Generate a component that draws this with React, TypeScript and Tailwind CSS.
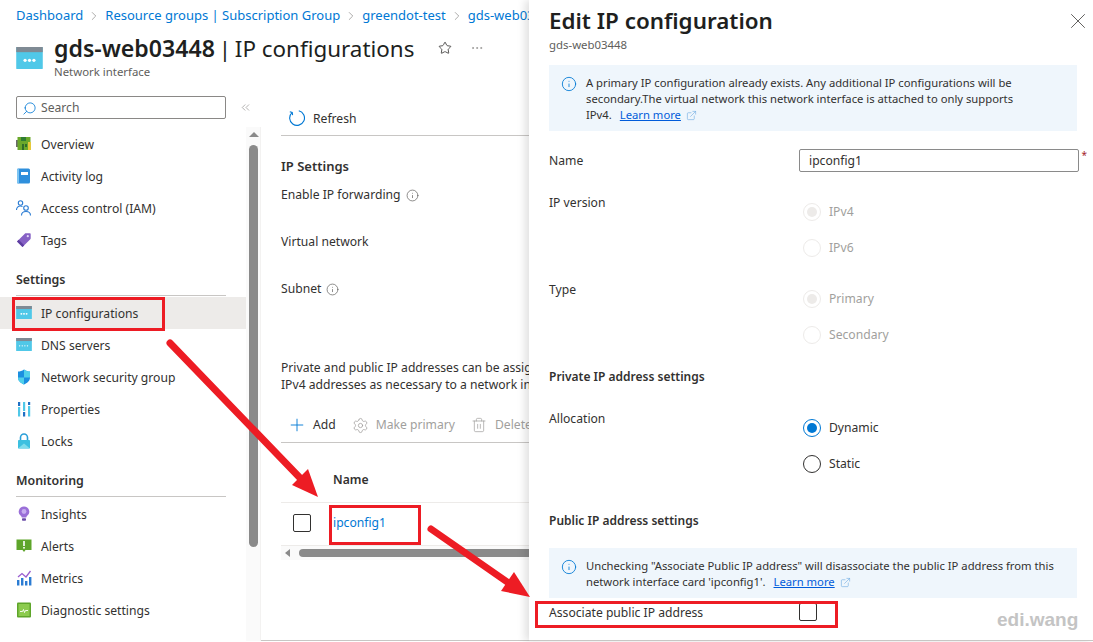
import { ChevronRight, ChevronsLeft, ExternalLink, Info, MoreHorizontal, Plus, Search, Settings, Star, Trash2, X } from 'lucide-react';

function NicIcon({ size = 16, dots = 3 }: { size?: number; dots?: number }) {
  const xs = dots === 3 ? [6, 9, 12] : [4, 7, 10, 13];
  return (
    <svg width={size} height={size * 0.82} viewBox="0 0 18 15" className="shrink-0">
      <rect x="0" y="0" width="18" height="15" rx="0.6" fill="#50c8e8" />
      <rect x="0" y="0" width="18" height="3.5" fill="#7f8a94" />
      {xs.map((x) => (
        <circle key={x} cx={x} cy="9" r={dots === 3 ? 1.1 : 0.8} fill="#fff" />
      ))}
    </svg>
  );
}

function OverviewIcon() {
  return (
    <svg width="16" height="16" viewBox="0 0 16 16">
      <rect x="0" y="4" width="2" height="7" fill="#6b6b6b" />
      <rect x="1.5" y="1" width="13" height="13" fill="#6aa82a" />
      <rect x="12" y="6" width="3" height="8" fill="#e6c93a" />
      <rect x="5" y="1" width="5" height="4" fill="#2f7d32" />
      <rect x="6" y="8" width="2" height="6" fill="#2f6d2a" />
      <rect x="9" y="8" width="2" height="3" fill="#2f6d2a" />
    </svg>
  );
}

function LogIcon() {
  return (
    <svg width="16" height="16" viewBox="0 0 16 16">
      <rect x="1" y="0.5" width="13" height="15" rx="1.5" fill="#2f8fdc" />
      <rect x="1" y="0.5" width="2" height="15" rx="1" fill="#7cc4f2" />
      <rect x="5" y="4" width="7" height="3" fill="#fff" />
    </svg>
  );
}

function IamIcon() {
  return (
    <svg width="16" height="16" viewBox="0 0 16 16" fill="none" stroke="#2b7cd3" strokeWidth="1.1">
      <circle cx="4.5" cy="3" r="2.2" />
      <path d="M0.5 10c0-2.6 1.6-4 4-4 .8 0 1.5.2 2 .5" />
      <circle cx="10" cy="8" r="2.3" />
      <path d="M5.5 15.5c0-2.8 1.8-4 4.5-4s4.5 1.2 4.5 4" />
    </svg>
  );
}

function TagIcon() {
  return (
    <svg width="16" height="16" viewBox="0 0 16 16">
      <path d="M1 9.5 8.8 1.7c.3-.3.6-.4 1-.4h3.9c.6 0 1 .4 1 1v3.9c0 .4-.1.7-.4 1L6.5 15 1 9.5z" fill="#8661c5" />
      <path d="M1 9.5 6.5 15l1.7-1.7L2.7 7.8 1 9.5z" fill="#5e3ea1" />
      <circle cx="11.8" cy="4.2" r="1.1" fill="#e5d8f7" />
    </svg>
  );
}

function ShieldIcon() {
  return (
    <svg width="16" height="16" viewBox="0 0 16 16">
      <path d="M8 0.5c2 1.5 4 2 6 2v6c0 3.5-3 5.7-6 7-3-1.3-6-3.500-6-7v-6c2 0 4-.5 6-2z" fill="#1b8fe0" />
      <path d="M8 0.5c2 1.5 4 2 6 2v6H8v7c-3-1.300-6-3.500-6-7h6v-8z" fill="#50d0ea" />
    </svg>
  );
}

function PropsIcon() {
  return (
    <svg width="16" height="16" viewBox="0 0 16 16">
      <rect x="2" y="1" width="2.200" height="4" fill="#1f6fc4" />
      <rect x="2" y="6" width="2.200" height="9.500" fill="#50c8e8" />
      <rect x="7" y="1" width="2.200" height="9" fill="#50c8e8" />
      <rect x="7" y="11" width="2.200" height="4.500" fill="#1f6fc4" />
      <rect x="12" y="1" width="2.200" height="3" fill="#1f6fc4" />
      <rect x="12" y="5" width="2.200" height="10.500" fill="#50c8e8" />
    </svg>
  );
}

function LockIcon() {
  return (
    <svg width="16" height="16" viewBox="0 0 16 16">
      <path d="M4.500 7V4.500a3.500 3.500 0 0 1 7 0V7" fill="none" stroke="#2b9fd8" strokeWidth="1.600" />
      <rect x="2" y="7" width="12" height="8.500" rx="0.800" fill="#3cc0e0" />
      <path d="M2 15.500 8 10.500l6 5z" fill="#7fdcec" />
    </svg>
  );
}

function BulbIcon() {
  return (
    <svg width="16" height="16" viewBox="0 0 16 16">
      <path d="M8 0.500a5.200 5.200 0 0 0-3 9.500c.5.400.7 1 .7 1.500h4.600c0-.5.200-1.100.7-1.500a5.200 5.200 0 0 0-3-9.500z" fill="#9a6fd8" />
      <circle cx="8" cy="5.500" r="2.400" fill="#c7aef0" />
      <rect x="6" y="12.300" width="4" height="2.400" rx="0.800" fill="#6a4ca8" />
    </svg>
  );
}

function AlertIcon() {
  return (
    <svg width="16" height="16" viewBox="0 0 16 16">
      <path d="M0.500 1.500h15v10.500H9.500L8 14l-1.500-2H0.500z" fill="#5ea52a" />
      <rect x="7.200" y="3" width="1.600" height="5" fill="#fff" />
      <rect x="7.200" y="9" width="1.600" height="1.600" fill="#fff" />
    </svg>
  );
}

function MetricsIcon() {
  return (
    <svg width="16" height="16" viewBox="0 0 16 16">
      <rect x="1" y="10" width="2.400" height="5.500" fill="#2b7cd3" />
      <rect x="5" y="8" width="2.400" height="7.500" fill="#2b7cd3" />
      <rect x="9" y="11" width="2.400" height="4.500" fill="#2b7cd3" />
      <rect x="13" y="7" width="2.400" height="8.500" fill="#2b7cd3" />
      <path d="M2 7 6 3.500 10 7 14.500 1" fill="none" stroke="#9a5fd0" strokeWidth="1.300" />
    </svg>
  );
}

function DiagIcon() {
  return (
    <svg width="16" height="16" viewBox="0 0 16 16">
      <rect x="1" y="0.500" width="14" height="15" rx="1" fill="#5ea52a" />
      <rect x="2.500" y="2" width="11" height="12" fill="#8ccb4e" />
      <path d="M4 9.500h2.500l1-2 1 3 1-2H12" fill="none" stroke="#fff" strokeWidth="0.900" />
    </svg>
  );
}

function RefreshIcon() {
  return (
    <svg width="16" height="16" viewBox="0 0 16 16" fill="none" stroke="#0078d4" strokeWidth="1.100" className="shrink-0">
      <path d="M9.800 0.800A7.400 7.400 0 1 1 3 2.600" />
      <path d="M0.800 1.700 3.200 2.500 3.600 5.200" />
    </svg>
  );
}

const first = [
  { label: 'Overview', icon: <OverviewIcon /> },
  { label: 'Activity log', icon: <LogIcon /> },
  { label: 'Access control (IAM)', icon: <IamIcon /> },
  { label: 'Tags', icon: <TagIcon /> },
];
const settings = [
  { label: 'IP configurations', icon: <NicIcon />, active: true },
  { label: 'DNS servers', icon: <NicIcon dots={4} /> },
  { label: 'Network security group', icon: <ShieldIcon /> },
  { label: 'Properties', icon: <PropsIcon /> },
  { label: 'Locks', icon: <LockIcon /> },
];
const monitoring = [
  { label: 'Insights', icon: <BulbIcon /> },
  { label: 'Alerts', icon: <AlertIcon /> },
  { label: 'Metrics', icon: <MetricsIcon /> },
  { label: 'Diagnostic settings', icon: <DiagIcon /> },
];

function NavRow({ label, icon, active }: { label: string; icon: React.ReactNode; active?: boolean }) {
  return (
    <div className={`flex h-8 items-center pl-4 ${active ? 'bg-[#edebe9]' : ''}`}>
      <span className="flex w-[25px] shrink-0 items-center">{icon}</span>
      <span className="pt-[2px] text-[#323130]">{label}</span>
    </div>
  );
}

function NavSection({ title }: { title: string }) {
  return (
    <div className="ml-4 mr-5 mt-[13px] mb-px">
      <div className="h-5 pt-px text-[12.4px] font-semibold leading-5 text-[#323130]">{title}</div>
      <div className="mt-[6px] h-px bg-[#c8c6c4]" />
    </div>
  );
}

function Radio({ label, state }: { label: string; state: 'on' | 'off' | 'disabled-on' | 'disabled-off' }) {
  const disabled = state === 'disabled-on' || state === 'disabled-off';
  return (
    <div className="flex h-9 items-center">
      <span
        className={`ml-[3px] flex h-[18px] w-[18px] items-center justify-center rounded-full border ${
          state === 'on' ? 'border-[#0078d4]' : disabled ? 'border-[#edebe9]' : 'border-[#323130]'
        }`}
      >
        {state === 'on' && <span className="h-[10px] w-[10px] rounded-full bg-[#0078d4]" />}
        {state === 'disabled-on' && <span className="h-[10px] w-[10px] rounded-full bg-[#edebe9]" />}
      </span>
      <span className={`ml-2 ${disabled ? 'text-[#a19f9d]' : 'text-[#323130]'}`}>{label}</span>
    </div>
  );
}

function RadioRow({ label, options, className }: { label: string; options: { label: string; state: 'on' | 'off' | 'disabled-on' | 'disabled-off' }[]; className: string }) {
  return (
    <div className={`flex ${className}`}>
      <div className="w-[251px] pt-px leading-4 text-[#323130]">{label}</div>
      <div>
        {options.map((o) => (
          <Radio key={o.label} {...o} />
        ))}
      </div>
    </div>
  );
}

function Notice({ children, className }: { children: React.ReactNode; className: string }) {
  return (
    <div className={`flex bg-[#eff6fc] pl-3 pr-4 leading-4 text-[#323130] ${className}`}>
      <Info className="mr-[9px] mt-px h-4 w-4 shrink-0 text-[#0078d4]" strokeWidth={1.3} />
      <div className="text-[11.25px]">{children}</div>
    </div>
  );
}

function LearnMore() {
  return (
    <>
      <span className="ml-2 text-[#015cda] underline">Learn more</span>
      <ExternalLink className="ml-[5px] inline h-[11px] w-[11px] text-[#6aa9e0]" strokeWidth={1.3} />
    </>
  );
}

function Crumb() {
  return <ChevronRight className="mx-1 h-[14px] w-[14px] shrink-0 text-[#8a8886]" strokeWidth={1.2} />;
}

export default function App() {
  return (
    <div className="relative flex h-[642px] w-[1093px] overflow-hidden bg-white font-['Noto_Sans','Open_Sans',sans-serif] text-[12.15px]">
      {/* left: resource page */}
      <div className="w-[529px] shrink-0 overflow-hidden whitespace-nowrap">
        <div className="flex h-8 items-center pl-4 text-[13px] text-[#0078d4]">
          <span>Dashboard</span>
          <Crumb />
          <span>Resource groups | Subscription Group</span>
          <Crumb />
          <span>greendot-test</span>
          <Crumb />
          <span>gds-web03448</span>
        </div>
        <div className="flex h-16 pl-4">
          <div className="mt-[15px] w-[38px]">
            <NicIcon size={27} />
          </div>
          <div>
            <div className="flex h-8 items-center text-[#201f1e]">
              <span className="text-[22.4px] leading-8">
                <span className="text-[23.1px] font-semibold">gds-web03448</span>
                <span className="-mx-[2px]"> | </span>IP configurations
              </span>
              <Star className="ml-6 h-[14px] w-[14px] shrink-0 text-[#323130]" strokeWidth={1.4} />
              <MoreHorizontal className="ml-[18px] h-[14px] w-[14px] shrink-0 text-[#8a8886]" strokeWidth={1.2} />
            </div>
            <div className="text-[11.4px] leading-4 text-[#605e5c]">Network interface</div>
          </div>
        </div>

        <div className="flex h-[545px]">
          {/* resource menu */}
          <div className="w-[246px] shrink-0">
            <div className="flex items-center">
              <div className="mx-4 flex h-[23px] w-[210px] shrink-0 items-center rounded-[2px] border border-[#8a8886] pl-[5px] pt-px">
                <Search className="h-[15px] w-[15px] shrink-0 -scale-x-100 text-[#0078d4]" strokeWidth={1.3} />
                <span className="ml-1 text-[#605e5c]">Search</span>
              </div>
              <ChevronsLeft className="-ml-[3px] h-[13px] w-[13px] shrink-0 text-[#8a8886]" strokeWidth={1.2} />
            </div>
            <div className="mt-[9px]">
              {first.map((r) => (
                <NavRow key={r.label} {...r} />
              ))}
            </div>
            <NavSection title="Settings" />
            {settings.map((r) => (
              <NavRow key={r.label} {...r} />
            ))}
            <NavSection title="Monitoring" />
            {monitoring.map((r) => (
              <NavRow key={r.label} {...r} />
            ))}
          </div>

          {/* menu scrollbar */}
          <div className="mt-[31px] flex w-[15px] shrink-0 flex-col items-center border-r border-[#f3f2f1] bg-[#fafafa] pl-px">
            <div className="mt-[5px] h-0 w-0 border-x-[5px] border-b-[5px] border-x-transparent border-b-[#8a8a8a]" />
            <div className="mt-2 h-[402px] w-[9px] rounded-[5px] bg-[#8a8a8a]" />
          </div>

          {/* content */}
          <div className="min-w-0 flex-1 border-b border-[#c8c6c4] pl-5 text-[#323130]">
            <div className="mt-[5px] flex h-[35px] items-center border-b border-[#c8c6c4] pl-2">
              <RefreshIcon />
              <span className="ml-2 pt-[3px]">Refresh</span>
            </div>
            <div className="mt-5 h-5 text-[13px] font-semibold leading-5">IP Settings</div>
            <div className="mt-[11px] flex h-4 items-center leading-4">
              Enable IP forwarding
              <Info className="ml-[5px] h-[13px] w-[13px] shrink-0 text-[#605e5c]" strokeWidth={1.3} />
            </div>
            <div className="mt-[31px] h-4 leading-4">Virtual network</div>
            <div className="mt-[31px] flex h-4 items-center leading-4">
              Subnet
              <Info className="ml-[5px] h-[13px] w-[13px] shrink-0 text-[#605e5c]" strokeWidth={1.3} />
            </div>
            <div className="mt-[62px] leading-[17px]">
              <div>Private and public IP addresses can be assigned to a virtual machine's network interface.</div>
              <div>IPv4 addresses as necessary to a network interface.</div>
            </div>
            <div className="mt-[15px] flex h-[35px] items-center border-b border-[#c8c6c4] pl-[6px]">
              <Plus className="h-5 w-5 shrink-0 text-[#0078d4]" strokeWidth={1.1} />
              <span className="ml-[6px] pt-px">Add</span>
              <Settings className="ml-4 h-[17px] w-[17px] shrink-0 text-[#a19f9d]" strokeWidth={1.1} />
              <span className="ml-[7px] pt-px text-[#a19f9d]">Make primary</span>
              <Trash2 className="ml-4 h-4 w-4 shrink-0 text-[#a19f9d]" strokeWidth={1.1} />
              <span className="ml-2 pt-px text-[#a19f9d]">Delete</span>
            </div>
            <div className="mt-4 flex h-11 items-center border-b border-[#edebe9] pl-[52px] font-semibold">Name</div>
            <div className="flex h-[43px] items-center border-b border-[#edebe9] pb-[3px] pl-3">
              <span className="h-[18px] w-[18px] shrink-0 rounded-[2px] border border-[#323130]" />
              <span className="ml-[22px] pt-[2px] text-[#0078d4]">ipconfig1</span>
            </div>
            <div className="flex h-[14px] items-center bg-[#fafafa] pl-1">
              <div className="h-0 w-0 border-y-[4px] border-r-[5px] border-y-transparent border-r-[#8a8a8a]" />
              <div className="ml-[9px] h-[8px] flex-1 rounded-l-[4px] bg-[#8a8a8a]" />
            </div>
          </div>
        </div>
      </div>

      {/* right: edit blade */}
      <div className="z-10 h-[641px] min-w-0 flex-1 border-b border-[#c8c6c4] bg-white pl-5 pr-4 pt-[5px] shadow-[-4px_0_8px_rgba(0,0,0,0.12)]">
        <div className="flex items-start justify-between">
          <div className="text-[22.4px] font-semibold leading-8 text-[#201f1e]">Edit IP configuration</div>
          <X className="mr-[-14px] mt-[3px] h-[26px] w-[26px] shrink-0 text-[#605e5c]" strokeWidth={0.9} />
        </div>
        <div className="text-[11.4px] leading-4 text-[#605e5c]">gds-web03448</div>

        <Notice className="mt-3 h-[66px] pt-[10px]">
          A primary IP configuration already exists. Any additional IP configurations will be secondary.The virtual network this network interface is attached to only supports IPv4.
          <LearnMore />
        </Notice>

        <div className="mt-[18px] flex h-[23px] items-center">
          <div className="w-[250px] shrink-0 pt-px text-[#323130]">Name</div>
          <div className="relative flex h-[23px] w-[280px] shrink-0 items-center rounded-[2px] border border-[#8a8a8a] pl-[9px] pt-px text-[#323130]">
            ipconfig1
            <span className="absolute right-[-9px] top-[-1px] text-[10px] leading-3 text-[#a4262c]">*</span>
          </div>
        </div>

        <RadioRow
          className="mt-[22px]"
          label="IP version"
          options={[
            { label: 'IPv4', state: 'disabled-on' },
            { label: 'IPv6', state: 'disabled-off' },
          ]}
        />
        <RadioRow
          className="mt-[15px]"
          label="Type"
          options={[
            { label: 'Primary', state: 'disabled-on' },
            { label: 'Secondary', state: 'disabled-off' },
          ]}
        />
        <div className="mt-[14px] h-5 text-[12px] font-semibold leading-5 text-[#323130]">Private IP address settings</div>
        <RadioRow
          className="mt-[23px]"
          label="Allocation"
          options={[
            { label: 'Dynamic', state: 'on' },
            { label: 'Static', state: 'off' },
          ]}
        />
        <div className="mt-[29px] h-5 text-[12px] font-semibold leading-5 text-[#323130]">Public IP address settings</div>

        <Notice className="mt-[17px] h-[50px] pt-[10px]">
          Unchecking "Associate Public IP address" will disassociate the public IP address from this network interface card 'ipconfig1'.
          <LearnMore />
        </Notice>

        <div className="flex h-[28px] items-center">
          <div className="w-[250px] shrink-0 pt-[3px] text-[#323130]">Associate public IP address</div>
          <span className="h-[18px] w-[18px] shrink-0 rounded-[2px] border border-[#323130]" />
        </div>
      </div>

      {/* red annotations drawn on top of the screenshot */}
      <div className="absolute left-[12px] top-[297px] z-20 h-[34px] w-[153px] border-[3px] border-[#ed1c24]" />
      <div className="absolute left-[329px] top-[505px] z-20 h-[40px] w-[92px] border-[3px] border-[#ed1c24]" />
      <div className="absolute left-[535px] top-[601px] z-20 h-[27px] w-[303px] border-[3px] border-[#ed1c24]" />
      <svg className="pointer-events-none absolute left-0 top-0 z-20" width="1093" height="642" viewBox="0 0 1093 642">
        <line x1="170" y1="343" x2="303" y2="481" stroke="#ed1c24" strokeWidth="7" strokeLinecap="round" />
        <polygon points="318,497 292,485 308,469" fill="#ed1c24" />
        <line x1="431" y1="529" x2="510" y2="584" stroke="#ed1c24" strokeWidth="7" strokeLinecap="round" />
        <polygon points="530,597 501,591 514,572" fill="#ed1c24" />
      </svg>

      <div className="absolute left-[997px] top-[608px] z-20 font-['Liberation_Sans',sans-serif] text-[19px] font-bold leading-6 text-[#c4c4c4]">edi.wang</div>
    </div>
  );
}
